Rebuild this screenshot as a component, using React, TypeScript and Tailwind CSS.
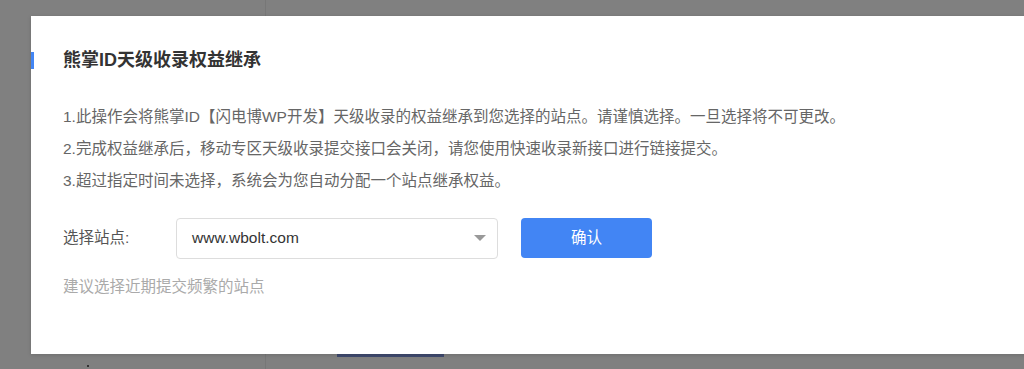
import React, { useState } from 'react';

const font = { fontFamily: '"Liberation Sans", "Noto Sans CJK SC", sans-serif' };

const notes = [
  '1.此操作会将熊掌ID【闪电博WP开发】天级收录的权益继承到您选择的站点。请谨慎选择。一旦选择将不可更改。',
  '2.完成权益继承后，移动专区天级收录提交接口会关闭，请您使用快速收录新接口进行链接提交。',
  '3.超过指定时间未选择，系统会为您自动分配一个站点继承权益。',
];

export default function App() {
  const [site] = useState('www.wbolt.com');

  return (
    <div className="relative h-[369px] w-[1024px] overflow-hidden bg-[#808080]" style={font}>
      {/* page behind the overlay */}
      <div className="flex h-full">
        <div className="relative h-full w-[266px] border-r border-[#777777]">
          <div className="absolute left-[87px] top-[365px] h-[2px] w-[2px] bg-[#333333]" />
        </div>
        <div className="relative flex-1">
          <div className="absolute left-[71px] top-[352px] h-[5px] w-[107px] bg-[#3f4a6e]" />
        </div>
      </div>

      {/* dialog */}
      <div className="absolute left-[31px] top-[16px] h-[338px] w-[1010px] bg-white shadow-[0_1px_4px_rgba(0,0,0,0.15)]">
        <div className="pt-[31px]">
          <div className="flex h-[26px] items-center">
            <div className="h-[17px] w-[3px] bg-[#4285f4]" />
            <h2 className="ml-[29px] text-[18px] font-bold text-[#333333]">熊掌ID天级收录权益继承</h2>
          </div>

          <div className="mt-[28px] pl-[32px] text-[15.5px] leading-[32px] text-[#666666]">
            {notes.map((n) => (
              <p key={n} className="whitespace-nowrap">{n}</p>
            ))}
          </div>

          <div className="mt-[21px] flex h-[40px] items-center pl-[32px]">
            <span className="w-[113px] text-[15.5px] text-[#555555]">选择站点:</span>
            <div className="flex h-[41px] w-[322px] items-center justify-between rounded-[4px] border border-[#dddddd] pl-[15px] pr-[11px]">
              <span className="text-[15.5px] text-[#333333]">{site}</span>
              <svg width="12" height="6" viewBox="0 0 12 6">
                <path d="M0 0h12L6 6z" fill="#999999" />
              </svg>
            </div>
            <button className="ml-[23px] h-[40px] w-[131px] rounded-[4px] bg-[#4285f4] text-[15.5px] text-white">
              确认
            </button>
          </div>

          <p className="mt-[18px] pl-[32px] text-[15.5px] leading-[22px] text-[#aaaaaa]">建议选择近期提交频繁的站点</p>
        </div>
      </div>
    </div>
  );
}
